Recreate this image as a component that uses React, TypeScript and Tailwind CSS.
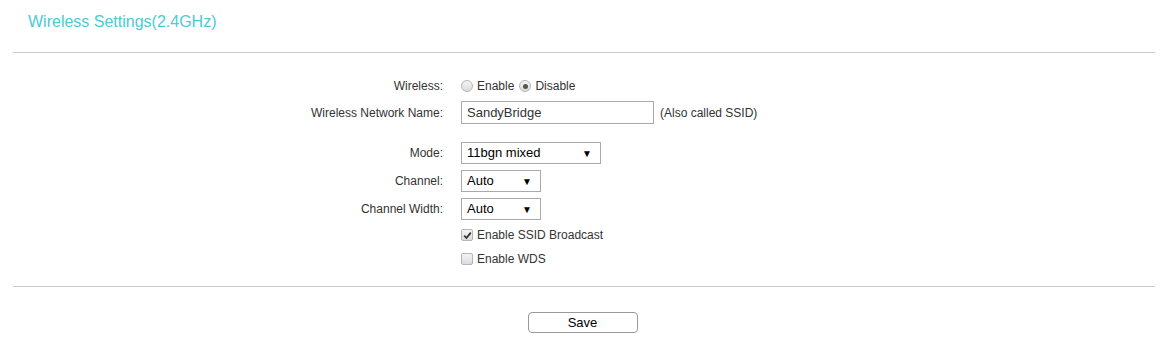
import React from "react";

const font = { fontFamily: '"Liberation Sans", Arial, sans-serif' };

function Row({
  label,
  children,
  className = "",
}: {
  label?: string;
  children: React.ReactNode;
  className?: string;
}) {
  return (
    <div className={`flex items-center ${className}`}>
      <div className="w-[443px] shrink-0 text-right text-[12px] text-[#333]">{label}</div>
      <div className="ml-[18px] flex items-center">{children}</div>
    </div>
  );
}

function Radio({ checked }: { checked?: boolean }) {
  return (
    <span className="flex h-[12px] w-[12px] items-center justify-center rounded-full border border-[#b5b5b5] bg-gradient-to-b from-[#f4f4f4] to-[#dcdcdc]">
      {checked && <span className="h-[5px] w-[5px] rounded-full bg-[#555]" />}
    </span>
  );
}

function Checkbox({ checked }: { checked?: boolean }) {
  return (
    <span className="flex h-[12px] w-[12px] items-center justify-center rounded-[2px] border border-[#b5b5b5] bg-gradient-to-b from-[#f4f4f4] to-[#dcdcdc]">
      {checked && (
        <svg width="9" height="9" viewBox="0 0 9 9">
          <path d="M1.2 4.6 L3.5 7 L7.8 1.6" stroke="#333" strokeWidth="1.8" fill="none" />
        </svg>
      )}
    </span>
  );
}

function Select({ value, width }: { value: string; width: string }) {
  return (
    <div
      className={`flex h-[22px] ${width} items-center justify-between border border-[#aaa] bg-white pl-[5px] pr-[8px] text-[13px] text-black`}
    >
      <span>{value}</span>
      <span className="text-[10px]">▼</span>
    </div>
  );
}

export default function App() {
  return (
    <div className="h-[359px] w-[1168px] bg-white" style={font}>
      <div className="pl-[28px] pt-[12px] text-[16px] leading-[20px] text-[#4acbd6]">
        Wireless Settings(2.4GHz)
      </div>
      <div className="mx-[13px] mt-[20px] border-t border-[#cccccc]" />

      <div className="pt-[23px]">
        <Row label="Wireless:" className="h-[20px]">
          <Radio />
          <span className="ml-[4px] text-[12px] text-[#333]">Enable</span>
          <span className="ml-[5px]">
            <Radio checked />
          </span>
          <span className="ml-[4px] text-[12px] text-[#333]">Disable</span>
        </Row>
        <Row label="Wireless Network Name:" className="mt-[5px]">
          <div className="flex h-[23px] w-[193px] items-center border border-[#aaa] pl-[5px] text-[13px] text-[#333]">
            SandyBridge
          </div>
          <span className="ml-[6px] text-[12px] text-[#333]">(Also called SSID)</span>
        </Row>
        <Row label="Mode:" className="mt-[18px]">
          <Select value="11bgn mixed" width="w-[140px]" />
        </Row>
        <Row label="Channel:" className="mt-[6px]">
          <Select value="Auto" width="w-[80px]" />
        </Row>
        <Row label="Channel Width:" className="mt-[6px]">
          <Select value="Auto" width="w-[80px]" />
        </Row>
        <Row className="mt-[6px] h-[18px]">
          <Checkbox checked />
          <span className="ml-[4px] text-[12px] text-[#333]">Enable SSID Broadcast</span>
        </Row>
        <Row className="mt-[6px] h-[18px]">
          <Checkbox />
          <span className="ml-[4px] text-[12px] text-[#333]">Enable WDS</span>
        </Row>
      </div>

      <div className="mx-[13px] mt-[18px] border-t border-[#cccccc]" />
      <div className="flex justify-center pt-[25px]">
        <button className="ml-[-3px] h-[21px] w-[110px] rounded-[4px] border border-[#999] bg-white text-[13px] text-black">
          Save
        </button>
      </div>
    </div>
  );
}
